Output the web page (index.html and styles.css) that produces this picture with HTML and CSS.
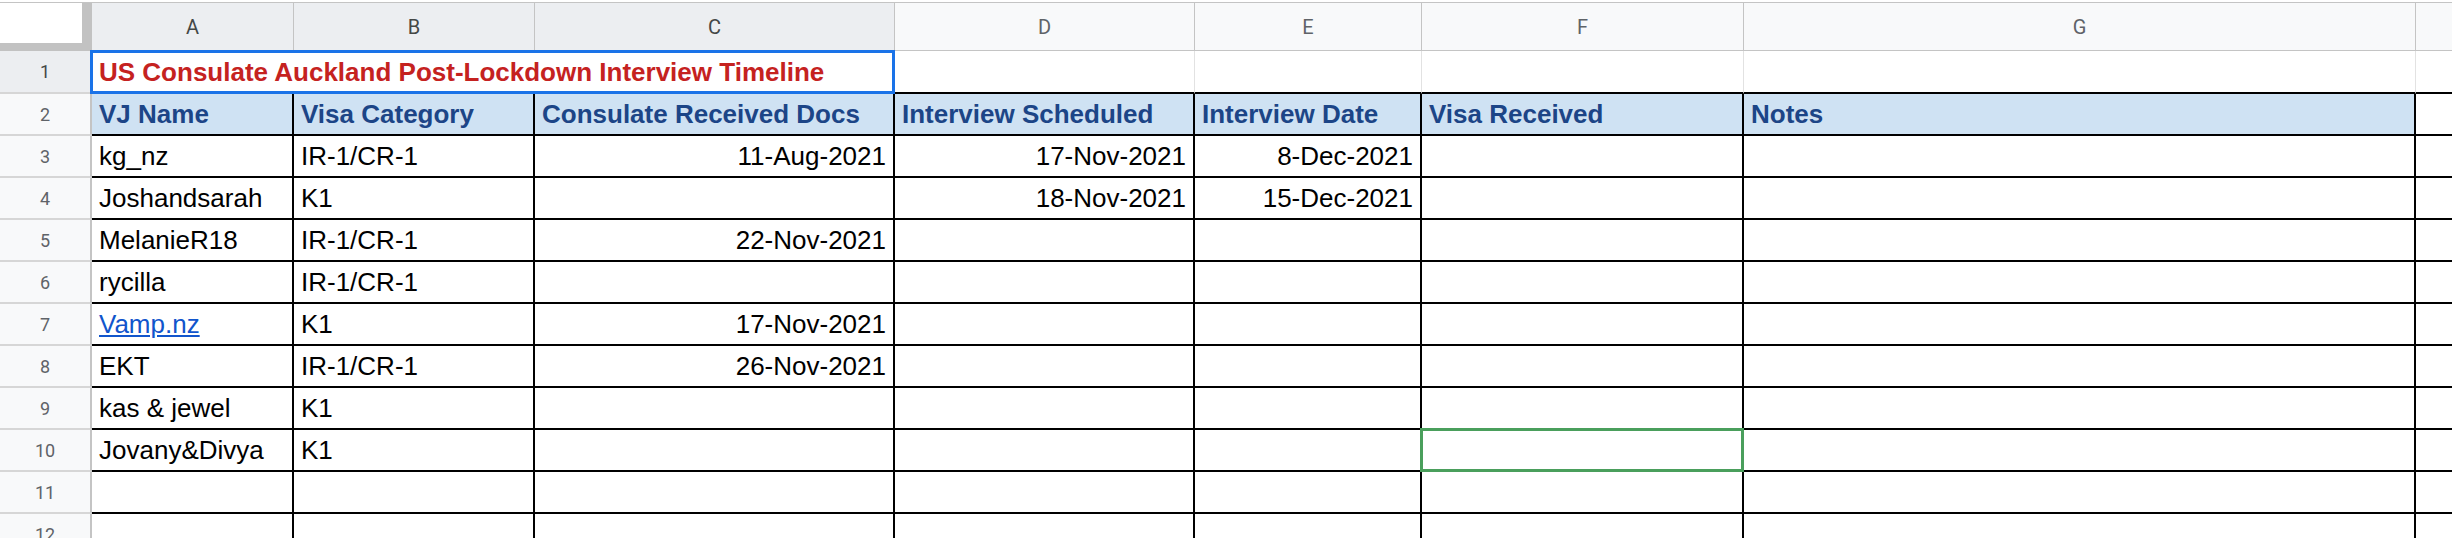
FILE: index.html
```html
<!DOCTYPE html>
<html>
<head>
<meta charset="utf-8">
<title>Sheet</title>
<link rel="stylesheet" href="styles.css">
</head>
<body>
<div class="sheet">
  <div class="row colhead">
    <div class="corner"></div>
    <div class="ch sel">A</div>
    <div class="ch sel">B</div>
    <div class="ch sel">C</div>
    <div class="ch">D</div>
    <div class="ch">E</div>
    <div class="ch">F</div>
    <div class="ch">G</div>
    <div class="ch last"></div>
  </div>
  <div class="row r1">
    <div class="rh sel">1</div>
    <div class="c title">US Consulate Auckland Post-Lockdown Interview Timeline<div class="selbox"></div></div>
    <div class="c"></div>
    <div class="c"></div>
    <div class="c"></div>
    <div class="c"></div>
    <div class="c x"></div>
  </div>
  <div class="row">
    <div class="rh">2</div>
    <div class="c h">VJ Name</div>
    <div class="c h">Visa Category</div>
    <div class="c h">Consulate Received Docs</div>
    <div class="c h">Interview Scheduled</div>
    <div class="c h">Interview Date</div>
    <div class="c h">Visa Received</div>
    <div class="c h">Notes</div>
    <div class="c x"></div>
  </div>
  <div class="row">
    <div class="rh">3</div>
    <div class="c">kg_nz</div>
    <div class="c">IR-1/CR-1</div>
    <div class="c r">11-Aug-2021</div>
    <div class="c r">17-Nov-2021</div>
    <div class="c r">8-Dec-2021</div>
    <div class="c"></div>
    <div class="c"></div>
    <div class="c x"></div>
  </div>
  <div class="row">
    <div class="rh">4</div>
    <div class="c">Joshandsarah</div>
    <div class="c">K1</div>
    <div class="c r"></div>
    <div class="c r">18-Nov-2021</div>
    <div class="c r">15-Dec-2021</div>
    <div class="c"></div>
    <div class="c"></div>
    <div class="c x"></div>
  </div>
  <div class="row">
    <div class="rh">5</div>
    <div class="c">MelanieR18</div>
    <div class="c">IR-1/CR-1</div>
    <div class="c r">22-Nov-2021</div>
    <div class="c"></div>
    <div class="c"></div>
    <div class="c"></div>
    <div class="c"></div>
    <div class="c x"></div>
  </div>
  <div class="row">
    <div class="rh">6</div>
    <div class="c">rycilla</div>
    <div class="c">IR-1/CR-1</div>
    <div class="c"></div>
    <div class="c"></div>
    <div class="c"></div>
    <div class="c"></div>
    <div class="c"></div>
    <div class="c x"></div>
  </div>
  <div class="row">
    <div class="rh">7</div>
    <div class="c"><a class="link" href="#">Vamp.nz</a></div>
    <div class="c">K1</div>
    <div class="c r">17-Nov-2021</div>
    <div class="c"></div>
    <div class="c"></div>
    <div class="c"></div>
    <div class="c"></div>
    <div class="c x"></div>
  </div>
  <div class="row">
    <div class="rh">8</div>
    <div class="c">EKT</div>
    <div class="c">IR-1/CR-1</div>
    <div class="c r">26-Nov-2021</div>
    <div class="c"></div>
    <div class="c"></div>
    <div class="c"></div>
    <div class="c"></div>
    <div class="c x"></div>
  </div>
  <div class="row">
    <div class="rh">9</div>
    <div class="c">kas &amp; jewel</div>
    <div class="c">K1</div>
    <div class="c"></div>
    <div class="c"></div>
    <div class="c"></div>
    <div class="c"></div>
    <div class="c"></div>
    <div class="c x"></div>
  </div>
  <div class="row">
    <div class="rh">10</div>
    <div class="c">Jovany&amp;Divya</div>
    <div class="c">K1</div>
    <div class="c"></div>
    <div class="c"></div>
    <div class="c"></div>
    <div class="c active"><div class="gsel"></div></div>
    <div class="c"></div>
    <div class="c x"></div>
  </div>
  <div class="row">
    <div class="rh">11</div>
    <div class="c"></div>
    <div class="c"></div>
    <div class="c"></div>
    <div class="c"></div>
    <div class="c"></div>
    <div class="c"></div>
    <div class="c"></div>
    <div class="c x"></div>
  </div>
  <div class="row">
    <div class="rh">12</div>
    <div class="c"></div>
    <div class="c"></div>
    <div class="c"></div>
    <div class="c"></div>
    <div class="c"></div>
    <div class="c"></div>
    <div class="c"></div>
    <div class="c x"></div>
  </div>
</div>
</body>
</html>
```

FILE: styles.css
```css
html, body {
  margin: 0;
  padding: 0;
  background: #ffffff;
}
body {
  width: 2452px;
  height: 538px;
  overflow: hidden;
}
.sheet {
  width: 2452px;
}
.row {
  display: grid;
  grid-template-columns: 92px 202px 241px 360px 300px 227px 322px 672px 1fr;
}
.colhead {
  margin-top: 2px;
  border-top: 1px solid #c4c4c4;
}
.corner {
  box-sizing: border-box;
  height: 48px;
  background: #ffffff;
  border-right: 10px solid #c2c2c2;
  border-bottom: 8px solid #c2c2c2;
}
.ch {
  box-sizing: border-box;
  height: 48px;
  background: #f8f9fa;
  border-right: 1px solid #c4c4c4;
  border-bottom: 1px solid #c4c4c4;
  display: flex;
  align-items: center;
  justify-content: center;
  font-family: Roboto, "Liberation Sans", sans-serif;
  font-size: 20px;
  color: #5f6368;
}
.ch.sel {
  background: #eceef1;
  color: #444746;
}
.ch.last {
  border-right: 0;
}
.rh {
  box-sizing: border-box;
  height: 42px;
  background: #f8f9fa;
  border-right: 2px solid #c4c4c4;
  border-bottom: 2px solid #d6d6d6;
  display: flex;
  align-items: center;
  justify-content: center;
  font-family: Roboto, "Liberation Sans", sans-serif;
  font-size: 18px;
  color: #5f6368;
}
.rh.sel {
  background: #eceef1;
  color: #444746;
}
.c {
  box-sizing: border-box;
  height: 42px;
  display: flex;
  align-items: center;
  padding: 0 7px;
  white-space: nowrap;
  overflow: hidden;
  border-right: 2px solid #000000;
  border-bottom: 2px solid #000000;
  font-family: "Liberation Sans", Arial, sans-serif;
  font-size: 26px;
  line-height: 30px;
  color: #000000;
}
.c.r {
  justify-content: flex-end;
}
.c.x {
  border-right: 0;
}
.r1 .rh,
.r1 .c {
  height: 43px;
}
.r1 .c {
  border-right: 1px solid #e2e2e2;
}
.r1 .c.x {
  border-right: 0;
}
.c.title {
  grid-column: span 3;
  position: relative;
  overflow: visible;
  font-weight: bold;
  color: #c5221f;
}
.selbox {
  position: absolute;
  left: -2px;
  top: -1px;
  right: -1px;
  bottom: -2px;
  border: 3px solid #1a73e8;
}
.c.h {
  background: #cfe2f3;
  font-weight: bold;
  color: #1c4587;
}
.link {
  color: #1155cc;
  text-decoration: underline;
}
.c.active {
  position: relative;
  overflow: visible;
}
.gsel {
  position: absolute;
  left: -2px;
  top: -2px;
  right: -2px;
  bottom: -2px;
  border: 3px solid #4a9f5c;
}
```
